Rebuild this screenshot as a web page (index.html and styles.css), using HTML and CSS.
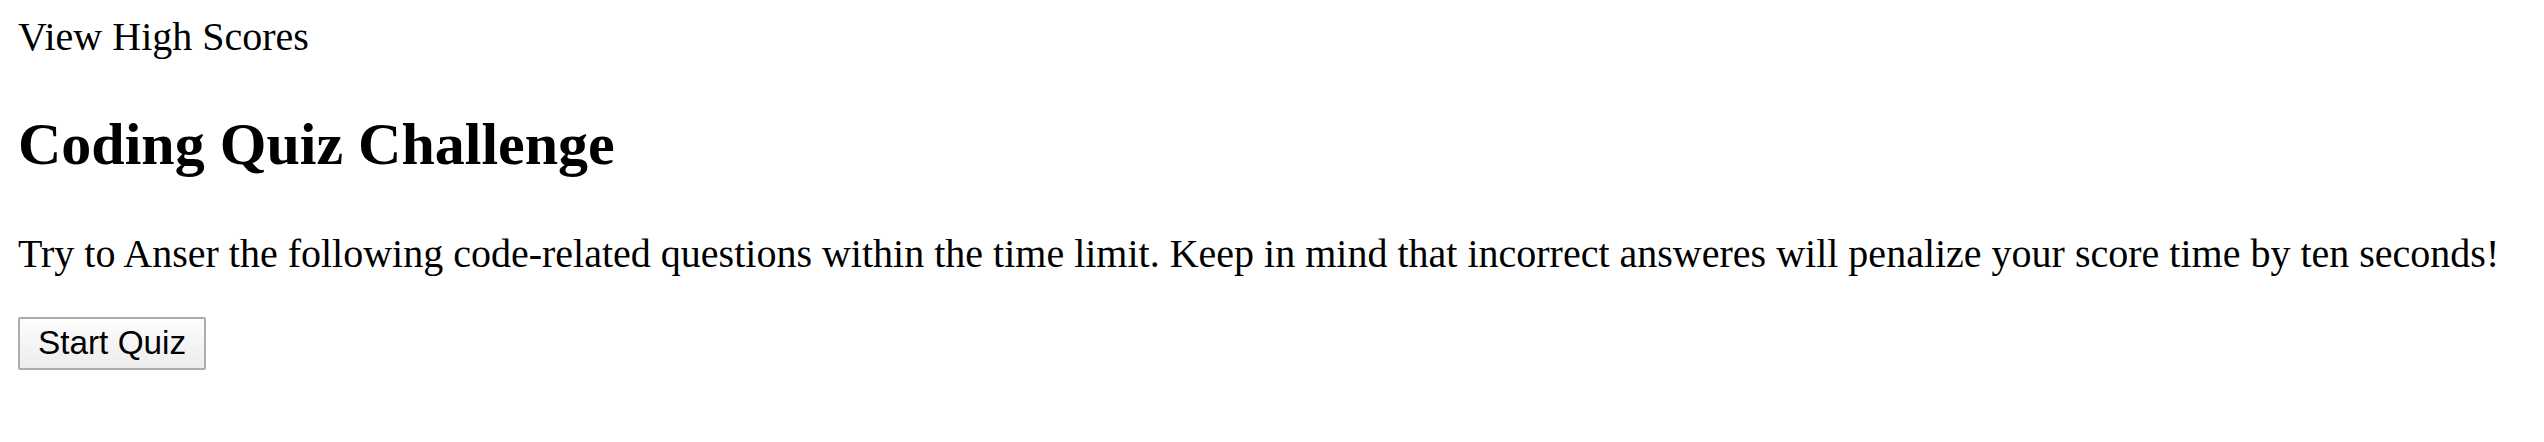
FILE: index.html
```html
<!DOCTYPE html>
<html lang="en">
<head>
<meta charset="utf-8">
<title>Coding Quiz Challenge</title>
<link rel="stylesheet" href="styles.css">
</head>
<body>
  <header class="top-bar">
    <div class="high-scores">View High Scores</div>
  </header>
  <section class="intro">
    <h1 class="intro-title">Coding Quiz Challenge</h1>
    <p class="intro-text">Try to Anser the following code-related questions within the time limit. Keep in mind that incorrect answeres will penalize your score time by ten seconds!</p>
    <button class="start-btn" type="button">Start Quiz</button>
  </section>
</body>
</html>
```

FILE: styles.css
```css
html, body {
  background: #ffffff;
}

body {
  margin: 0;
  padding: 13px 18px;
  font-family: "Liberation Serif", "Times New Roman", serif;
  font-size: 40px;
  color: #000000;
}

.high-scores {
  line-height: normal;
}

.intro-title {
  font-size: 60px;
  font-weight: bold;
  margin: 50px 0 51px;
}

.intro-text {
  margin: 0 0 40px;
  white-space: nowrap;
}

.start-btn {
  font-family: "Liberation Sans", Arial, sans-serif;
  font-size: 33.33px;
  color: #000000;
  padding: 5px 18px 6px;
  border: 2px solid #adadad;
  border-radius: 2px;
  background: linear-gradient(#fdfdfd, #ececec);
  line-height: normal;
}
```
